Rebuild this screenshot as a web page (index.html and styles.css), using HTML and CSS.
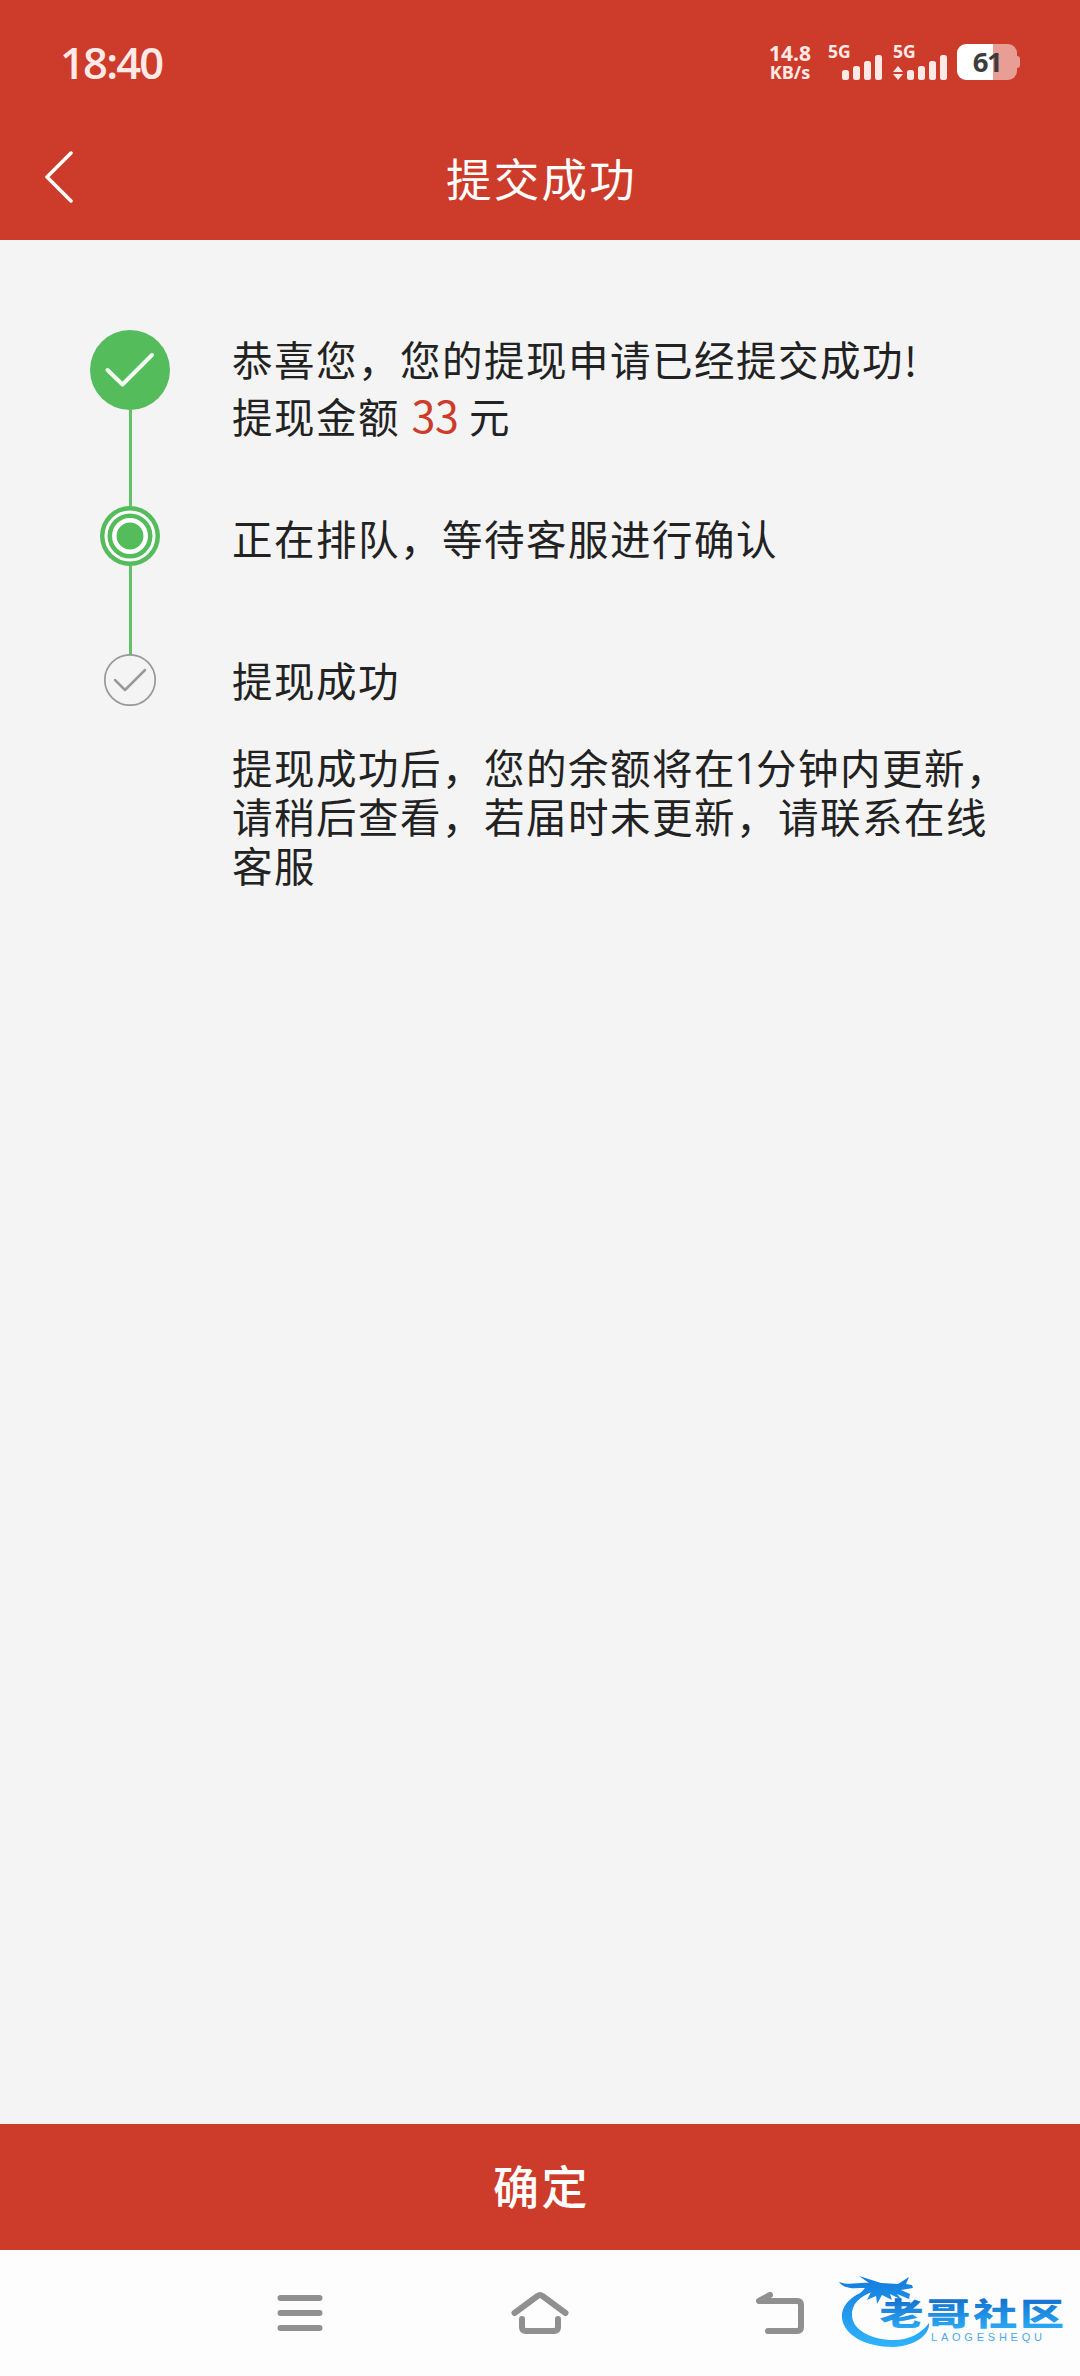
FILE: index.html
```html
<!DOCTYPE html>
<html lang="zh-CN">
<head>
    <meta charset="UTF-8">
    <meta name="viewport" content="width=device-width, initial-scale=1.0">
    <title>提交成功</title>
    <link rel="stylesheet" href="styles.css">
</head>
<body>
    <div class="status-bar">
        <div class="time">18:40</div>
        <div class="status-icons">
            <div class="speed">
                <span class="speed-value">14.8</span>
                <span class="speed-unit">KB/s</span>
            </div>
            <div class="signal">
                <span class="network">5G</span>
                <svg class="bars" width="54" height="26" viewBox="0 0 54 26">
                    <rect x="14" y="15" width="7" height="10" rx="2.5"/>
                    <rect x="25" y="11" width="7" height="14" rx="2.5"/>
                    <rect x="36" y="6" width="7" height="19" rx="2.5"/>
                    <rect x="47" y="0" width="7" height="25" rx="2.5"/>
                </svg>
            </div>
            <div class="signal">
                <span class="network">5G</span>
                <svg class="bars" width="54" height="26" viewBox="0 0 54 26">
                    <path d="M5 11l5 6H0zM0 19h10l-5 6z"/>
                    <rect x="14" y="15" width="7" height="10" rx="2.5"/>
                    <rect x="25" y="11" width="7" height="14" rx="2.5"/>
                    <rect x="36" y="6" width="7" height="19" rx="2.5"/>
                    <rect x="47" y="0" width="7" height="25" rx="2.5"/>
                </svg>
            </div>
            <div class="battery">61</div>
        </div>
    </div>

    <header class="header">
        <svg class="back" width="30" height="52" viewBox="0 0 30 52">
            <path d="M27 2L3 26l24 24"/>
        </svg>
        <h1>提交成功</h1>
    </header>

    <main class="content">
        <div class="step step-done">
            <div class="marker">
                <svg width="80" height="80" viewBox="0 0 80 80">
                    <circle cx="40" cy="40" r="40" fill="#55bc5c"/>
                    <path class="check" d="M17.500 40L32.500 54.500L62 25"/>
                </svg>
                <div class="line"></div>
            </div>
            <div class="text">
                <p>恭喜您，您的提现申请已经提交成功!</p>
                <p>提现金额 <span class="amount">33</span> 元</p>
            </div>
        </div>
        <div class="step step-current">
            <div class="marker">
                <svg width="60" height="60" viewBox="0 0 60 60">
                    <circle cx="30" cy="30" r="30" fill="#55bc5c"/>
                    <circle cx="30" cy="30" r="24" fill="none" stroke="#fff" stroke-width="3"/>
                    <circle cx="30" cy="30" r="15.700" fill="none" stroke="#fff" stroke-width="4.500"/>
                </svg>
                <div class="line"></div>
            </div>
            <div class="text">
                <p>正在排队，等待客服进行确认</p>
            </div>
        </div>
        <div class="step step-next">
            <div class="marker">
                <svg width="52" height="52" viewBox="0 0 52 52">
                    <circle cx="26" cy="26" r="25.200" fill="none" stroke="#999" stroke-width="1.700"/>
                    <path class="check check-grey" d="M11 26L21 36L41 16"/>
                </svg>
            </div>
            <div class="text">
                <p>提现成功</p>
                <p class="note">提现成功后，您的余额将在<span class="minutes">1</span>分钟内更新，<br>请稍后查看，若届时未更新，请联系在线<br>客服</p>
            </div>
        </div>
    </main>

    <button class="confirm">确定</button>

    <nav class="nav-bar">
        <svg class="nav-icon" width="60" height="60" viewBox="0 0 60 60">
            <path d="M10.500 15h39M10.500 30h39M10.500 45h39"/>
        </svg>
        <svg class="nav-icon" width="60" height="60" viewBox="0 0 60 60">
            <path d="M4.500 30L27.500 13Q30 11 32.500 13L55.500 30M12 36v8q0 4 4 4h28q4 0 4-4v-8"/>
        </svg>
        <svg class="nav-icon" width="60" height="60" viewBox="0 0 60 60">
            <path d="M20 12L9 18H47Q51 18 51 22V44Q51 48 47 48H18"/>
        </svg>
    </nav>

    <svg class="watermark" width="230" height="86" viewBox="0 0 230 86">
        <defs>
            <linearGradient id="blue" gradientUnits="userSpaceOnUse" x1="0" y1="6" x2="0" y2="80">
                <stop offset="0" stop-color="#1379dc"/>
                <stop offset="1" stop-color="#2fb5fb"/>
            </linearGradient>
            <linearGradient id="word" gradientUnits="userSpaceOnUse" x1="0" y1="32" x2="0" y2="62">
                <stop offset="0" stop-color="#1674d0"/>
                <stop offset="1" stop-color="#2bacf5"/>
            </linearGradient>
        </defs>
        <g fill="url(#blue)">
            <path d="M34 20C13 26 2 37 3 50C5 67 26 79 54 79C76 78 91 67 90 55C82 66 69 72 55 72C32 72 14 62 13 48C12 37 20 28 36 23Z"/>
            <path d="M0 14C11 18 19 14 30 15L20 8L42 15L59 16L70 9L67 16L73 17L74 20L62 22L71 26L70 31L58 26L63 32L51 26L53 32L43 27L38 36L37 28L28 32L32 24L18 29L26 20C16 20 6 22 0 14Z"/>
        </g>
        <g class="logo-word" transform="scale(1.420 1)">
            <text x="28.500" y="57">老</text>
            <text x="61.500" y="57">哥</text>
            <text x="94.500" y="57">社</text>
            <text x="127.500" y="57">区</text>
        </g>
        <text class="logo-latin" x="92" y="73" textLength="111">LAOGESHEQU</text>
    </svg>
</body>
</html>
```
FILE: styles.css
```css
* {
    box-sizing: border-box;
}
body {
    margin: 0;
    height: 2376px;
    display: flex;
    flex-direction: column;
    position: relative;
    background-color: #f4f4f4;
    color: #222;
    font-family: "Noto Sans CJK SC", sans-serif;
}
h1, p {
    margin: 0;
    font-weight: normal;
}
svg {
    display: block;
    flex-shrink: 0;
}

/* top */
.status-bar {
    height: 120px;
    padding: 0 60px;
    display: flex;
    justify-content: space-between;
    background-color: #cd3c2a;
    color: #ffe9e6;
    font-family: "Open Sans", sans-serif;
}
.time {
    padding-top: 33px;
    font-size: 43.500px;
    line-height: 60px;
    font-weight: 600;
    letter-spacing: -1.800px;
}
.status-icons {
    display: flex;
    align-items: flex-start;
    padding-top: 44px;
}
.speed {
    width: 46px;
    margin-right: 15px;
    display: flex;
    flex-direction: column;
    align-items: center;
    font-weight: 700;
}
.speed-value {
    font-size: 21px;
    line-height: 18px;
}
.speed-unit {
    font-size: 18px;
    line-height: 20px;
}
.signal {
    width: 54px;
    margin-right: 11px;
}
.network {
    display: block;
    height: 11px;
    font-size: 17.500px;
    line-height: 15px;
    font-weight: 700;
}
.bars {
    fill: #ffe9e6;
}
.battery {
    width: 60px;
    height: 36px;
    margin-right: 3px;
    margin-left: -1px;
    position: relative;
    border-radius: 9px;
    background: linear-gradient(to right, #fff 36px, #e89d95 36px);
    color: #3c3c3c;
    font-size: 27.500px;
    line-height: 36px;
    font-weight: 700;
    letter-spacing: -1.500px;
    text-align: center;
}
.battery::after {
    content: "";
    position: absolute;
    left: 60px;
    top: 12px;
    width: 3px;
    height: 12px;
    border-radius: 0 3px 3px 0;
    background-color: #e89d95;
}
.header {
    height: 120px;
    padding: 0 43px 0 44px;
    display: flex;
    align-items: center;
    background-color: #cd3c2a;
    color: #fff;
}
.back {
    margin-bottom: 6px;
    fill: none;
    stroke: #fff;
    stroke-width: 3.500;
    stroke-linecap: round;
    stroke-linejoin: round;
}
.header h1 {
    flex: 1;
    padding-right: 28px;
    padding-bottom: 7px;
    font-size: 45.500px;
    line-height: 66px;
    letter-spacing: 2.300px;
    text-align: center;
}

/* steps */
.content {
    flex: 1;
    padding: 90px 60px 0 90px;
}
.step {
    display: flex;
    gap: 62px;
}
.step-done {
    height: 176px;
}
.step-current {
    height: 148px;
}
.marker {
    width: 80px;
    display: flex;
    flex-direction: column;
    align-items: center;
}
.line {
    flex: 1;
    width: 3px;
    background-color: #62c268;
}
.check {
    fill: none;
    stroke: #f2fff2;
    stroke-width: 4;
    stroke-linecap: round;
    stroke-linejoin: round;
}
.check-grey {
    stroke: #999;
    stroke-width: 2.500;
}
.text {
    flex: 1;
    font-size: 40.500px;
    line-height: 57px;
    letter-spacing: 1.500px;
    white-space: nowrap;
}
.step-current .text {
    padding-top: 3px;
}
.step-next .text {
    margin-top: -3px;
}
.amount {
    margin-left: 1px;
    color: #cd3c2a;
    font-size: 43px;
    line-height: 1;
    letter-spacing: -0.500px;
}
.minutes {
    margin-left: -2px;
    font-family: "Open Sans", sans-serif;
    font-size: 43px;
    line-height: 1;
    letter-spacing: -2.600px;
}
.text .note {
    margin-top: 34px;
    line-height: 49px;
}

/* bottom */
.confirm {
    height: 126px;
    padding: 0 0 6px 3px;
    border: none;
    background-color: #cd3c2a;
    color: #fff;
    font-family: inherit;
    font-size: 46px;
    font-weight: 500;
    letter-spacing: 2.500px;
}
.nav-bar {
    height: 126px;
    display: flex;
    justify-content: center;
    align-items: center;
    gap: 180px;
    background-color: #fdfdfd;
}
.nav-icon {
    fill: none;
    stroke: #909090;
    stroke-width: 6;
    stroke-linecap: round;
    stroke-linejoin: round;
}
.watermark {
    position: absolute;
    right: 11px;
    bottom: 22px;
}
.logo-word {
    fill: url(#word);
    font-size: 31px;
    font-weight: 900;
}
.logo-latin {
    fill: #4aa9ea;
    font-family: "Liberation Sans", sans-serif;
    font-size: 11px;
}
```
